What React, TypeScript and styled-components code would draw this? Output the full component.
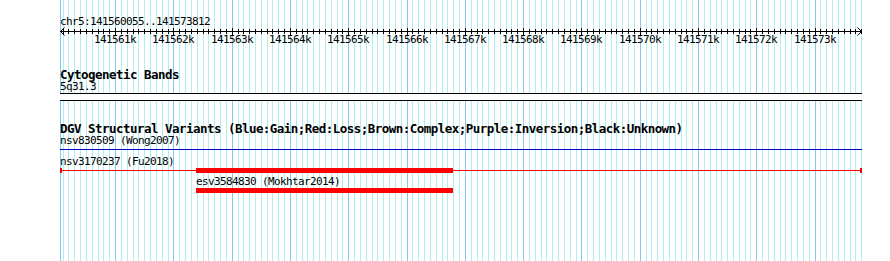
import React from "react";
import styled, { createGlobalStyle } from "styled-components";

const START = 141560055;
const END = 141573812;
const TRACK_WIDTH = 802;
const scale = TRACK_WIDTH / (END - START + 1);
const toX = (bp: number) => Math.round((bp - START) * scale);

const MONO = '"DejaVu Sans Mono", "Liberation Mono", monospace';

const GlobalStyle = createGlobalStyle`
  html, body {
    margin: 0;
    padding: 0;
    background: #ffffff;
  }
`;

const Page = styled.div`
  width: 890px;
  height: 261px;
  overflow: hidden;
  background: #ffffff;
  font-family: ${MONO};
  color: #000;
`;

const Canvas = styled.div`
  position: relative;
  margin-left: 60px;
  width: ${TRACK_WIDTH}px;
  height: 261px;
`;

const GridLayer = styled.svg`
  position: absolute;
  left: 0;
  top: 0;
`;

const Content = styled.div`
  position: relative;
  display: flex;
  flex-direction: column;
`;

const SmallText = styled.div<{ $top?: number }>`
  height: 12px;
  line-height: 12px;
  font-size: 11px;
  letter-spacing: -0.62px;
  white-space: pre;
  margin-top: ${(p) => p.$top ?? 0}px;
`;

const TrackTitle = styled.div<{ $top: number }>`
  height: 12px;
  line-height: 12px;
  font-size: 12.5px;
  letter-spacing: -0.53px;
  font-weight: bold;
  white-space: pre;
  margin-top: ${(p) => p.$top}px;
`;

const BandBox = styled.div`
  height: 6px;
  border-top: 1px solid #000;
  border-bottom: 1px solid #000;
  background: #fff;
`;

const RulerSvg = styled.svg`
  display: block;
  overflow: visible;
`;

const RulerLabel = styled.text`
  font-family: ${MONO};
  font-size: 11px;
  letter-spacing: -0.62px;
  fill: #000;
`;

const FeatureSvg = styled.svg<{ $gap: number }>`
  display: block;
  margin-bottom: ${(p) => p.$gap}px;
`;

function Grid() {
  const minor: number[] = [];
  const major: number[] = [0];
  for (let bp = Math.ceil(START / 100) * 100; bp <= END; bp += 100) {
    if (bp % 1000 === 0) major.push(toX(bp));
    else minor.push(toX(bp));
  }
  return (
    <GridLayer width={TRACK_WIDTH} height={261} shapeRendering="crispEdges">
      {minor.map((x) => (
        <rect key={"m" + x} x={x} y={0} width={1} height={261} fill="#afeeee" />
      ))}
      {major.map((x) => (
        <rect key={"M" + x} x={x} y={0} width={1} height={261} fill="#87c8f2" />
      ))}
    </GridLayer>
  );
}

function Ruler() {
  const ticks: { x: number; big: boolean }[] = [];
  const labels: { x: number; text: string }[] = [];
  for (let bp = Math.ceil(START / 100) * 100; bp <= END; bp += 100) {
    const x = toX(bp);
    const big = bp % 1000 === 0;
    ticks.push({ x, big });
    if (big) labels.push({ x, text: `${bp / 1000}k` });
  }
  const right = TRACK_WIDTH - 1;
  return (
    <RulerSvg width={TRACK_WIDTH} height={20}>
      <rect x={0} y={3} width={TRACK_WIDTH} height={1} fill="#000" shapeRendering="crispEdges" />
      {ticks.map((t) => (
        <rect
          key={t.x}
          x={t.x}
          y={t.big ? 0 : 1}
          width={1}
          height={t.big ? 7 : 5}
          fill="#000"
          shapeRendering="crispEdges"
        />
      ))}
      <path d={`M4.5 -0.5 L0.5 3.5 L4.5 7.5`} stroke="#000" fill="none" />
      <path d={`M${right - 3.5} -0.5 L${right + 0.5} 3.5 L${right - 3.5} 7.5`} stroke="#000" fill="none" />
      {labels.map((l) => (
        <RulerLabel key={l.text} x={l.x - 21} y={15}>
          {l.text}
        </RulerLabel>
      ))}
    </RulerSvg>
  );
}

type Feature = {
  name: string;
  color: string;
  start: number;
  end: number;
  thickStart?: number;
  thickEnd?: number;
  thin: boolean;
  caps: boolean;
  labelAt: number;
  gap: number;
};

const variants: Feature[] = [
  {
    name: "nsv830509 (Wong2007)",
    color: "#0000cc",
    start: START,
    end: END,
    thin: true,
    caps: false,
    labelAt: START,
    gap: 4,
  },
  {
    name: "nsv3170237 (Fu2018)",
    color: "#ff0000",
    start: START,
    end: END,
    thickStart: 141562390,
    thickEnd: 141566800,
    thin: true,
    caps: true,
    labelAt: START,
    gap: 3,
  },
  {
    name: "esv3584830 (Mokhtar2014)",
    color: "#ff0000",
    start: 141562390,
    end: 141566800,
    thickStart: 141562390,
    thickEnd: 141566800,
    thin: false,
    caps: false,
    labelAt: 141562390,
    gap: 0,
  },
];

function VariantRow({ f }: { f: Feature }) {
  const x0 = toX(f.start);
  const x1 = Math.min(toX(f.end), TRACK_WIDTH);
  return (
    <>
      <SmallText style={{ paddingLeft: toX(f.labelAt) }}>{f.name}</SmallText>
      <FeatureSvg width={TRACK_WIDTH} height={5} $gap={f.gap} shapeRendering="crispEdges">
        {f.thin && <rect x={x0} y={2} width={x1 - x0} height={1} fill={f.color} />}
        {f.caps && (
          <>
            <rect x={x0} y={0} width={2} height={5} fill={f.color} />
            <rect x={x1 - 2} y={0} width={2} height={5} fill={f.color} />
          </>
        )}
        {f.thickStart !== undefined && f.thickEnd !== undefined && (
          <rect
            x={toX(f.thickStart)}
            y={0}
            width={toX(f.thickEnd) - toX(f.thickStart)}
            height={5}
            fill={f.color}
          />
        )}
      </FeatureSvg>
    </>
  );
}

export default function App() {
  return (
    <Page>
      <GlobalStyle />
      <Canvas>
        <Grid />
        <Content>
          <SmallText $top={16}>chr5:141560055..141573812</SmallText>
          <Ruler />
          <TrackTitle $top={21}>Cytogenetic Bands</TrackTitle>
          <SmallText>5q31.3</SmallText>
          <BandBox />
          <TrackTitle $top={22}>
            DGV Structural Variants (Blue:Gain;Red:Loss;Brown:Complex;Purple:Inversion;Black:Unknown)
          </TrackTitle>
          {variants.map((f) => (
            <VariantRow key={f.name} f={f} />
          ))}
        </Content>
      </Canvas>
    </Page>
  );
}
